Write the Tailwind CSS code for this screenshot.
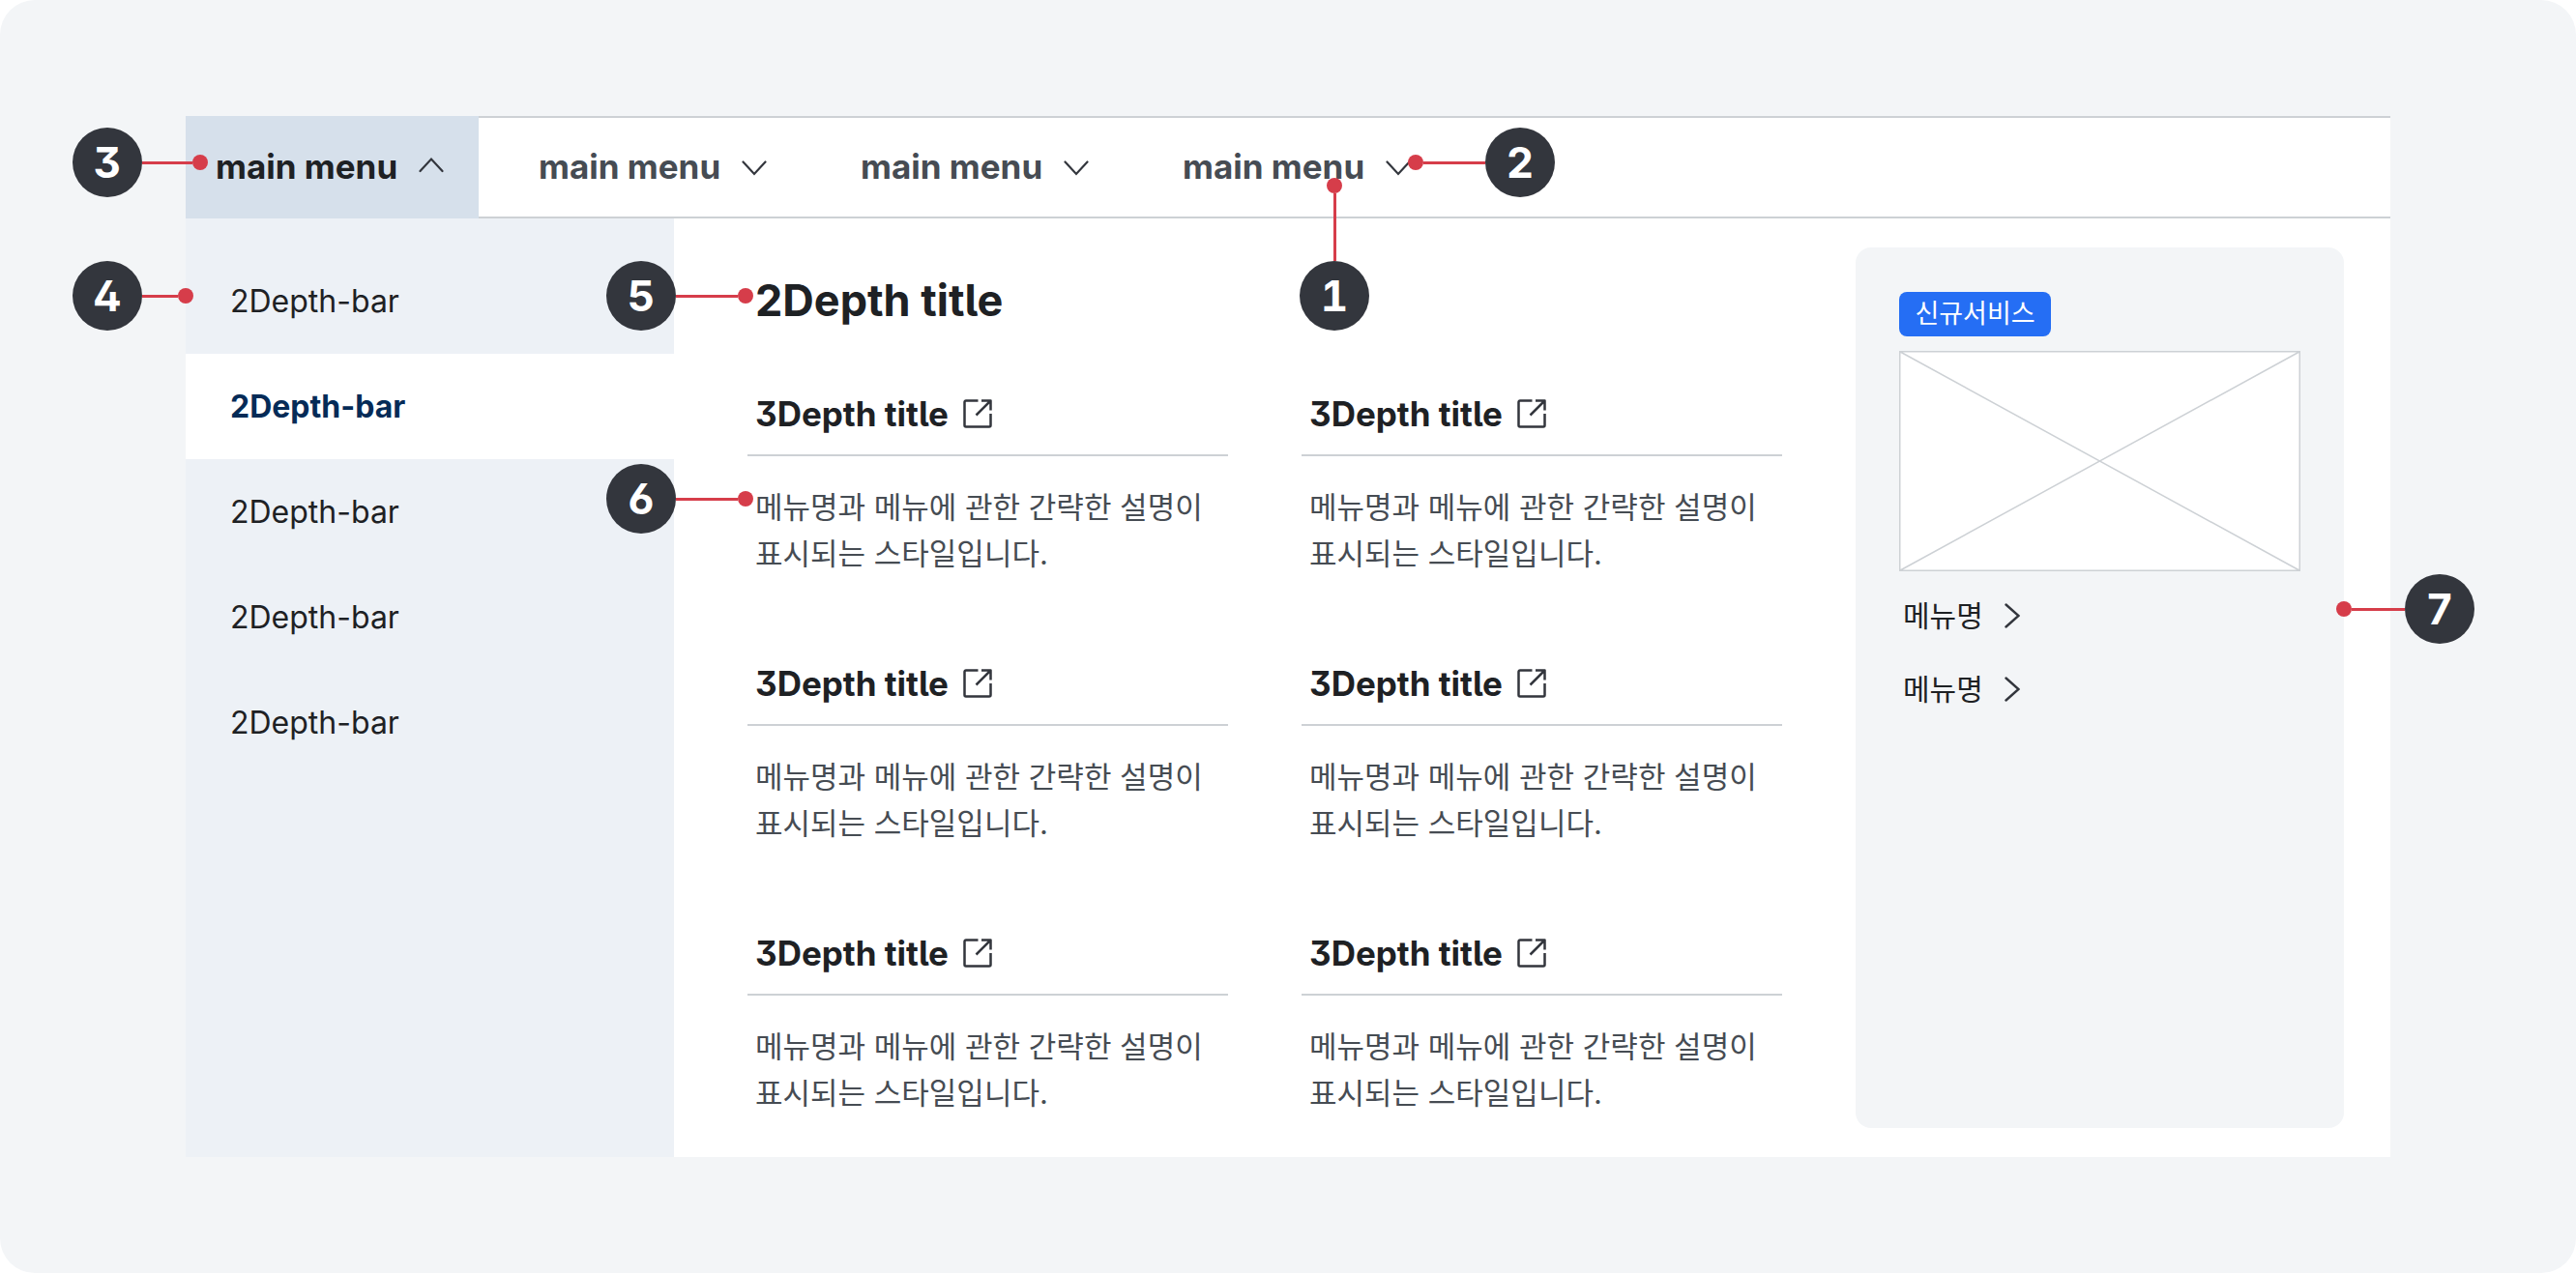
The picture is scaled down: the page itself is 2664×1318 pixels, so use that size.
<!DOCTYPE html>
<html lang="ko">
<head>
<meta charset="utf-8">
<meta name="viewport" content="width=device-width, initial-scale=1">
<title>main menu</title>
<script src="https://cdn.jsdelivr.net/npm/@tailwindcss/browser@4"></script>
</head>
<body class="bg-white font-[Inter,'Noto_Sans_CJK_KR',sans-serif] text-[#1e2124] [font-feature-settings:'cv02','cv03','cv05','cv09']">

<svg class="hidden" aria-hidden="true">
  <symbol id="up" viewBox="0 0 26 26"><path d="M1.5 18 13 5.500 24.500 18" fill="none" stroke="#33363d" stroke-width="2.200" stroke-linecap="round" stroke-linejoin="miter"/></symbol>
  <symbol id="down" viewBox="0 0 26 26"><path d="M1.500 8.500 13 21 24.500 8.500" fill="none" stroke="#33363d" stroke-width="2.200" stroke-linecap="round" stroke-linejoin="miter"/></symbol>
  <symbol id="right" viewBox="0 0 16 26"><path d="M1.500 1.500 14.500 13 1.500 24.500" fill="none" stroke="#33363d" stroke-width="2.400" stroke-linecap="round" stroke-linejoin="miter"/></symbol>
  <symbol id="open" viewBox="0 0 30 30"><path d="M15.500 1.500H3a1.500 1.500 0 0 0-1.500 1.500V27A1.500 1.500 0 0 0 3 28.500H27A1.500 1.500 0 0 0 28.500 27V15M19 1.500H28.500V11.500M28 2 13.500 16.500" fill="none" stroke="#33363d" stroke-width="2.500" stroke-linecap="butt" stroke-linejoin="round"/></symbol>
</svg>

<main class="min-h-[1317px] rounded-[36px] bg-[#f3f5f7] px-48 py-[120px]">
  <div class="bg-white">

    <!-- Main menu -->
    <nav aria-label="main menu" class="h-[106px] border-y-2 border-[#cdd1d5]">
      <ul class="flex h-full gap-[30px] text-[35px] font-bold text-[#464c53]">
        <li class="relative -my-0.5 w-[303px] bg-[#d6e0eb] text-[#1e2124]">
          <button type="button" aria-expanded="true" class="flex size-full items-center gap-[22px] pb-0.5 pl-[31px]">main menu<svg class="size-[26px]"><use href="#up"/></svg></button>
          <span class="absolute top-3 -left-[117px] flex items-center">
            <span class="flex size-18 items-center justify-center rounded-full bg-[#33363d] text-[44px] leading-none text-white [font-feature-settings:'tnum','cv02','cv03','cv09']">3</span>
            <span class="h-[3px] w-[52px] bg-[#d63d4a]"></span><span class="size-4 rounded-full bg-[#d63d4a]"></span>
          </span>
        </li>
        <li class="-my-0.5 w-[303px]">
          <button type="button" aria-expanded="false" class="flex size-full items-center gap-[22px] pb-0.5 pl-8">main menu<svg class="size-[26px]"><use href="#down"/></svg></button>
        </li>
        <li class="-my-0.5 w-[303px]">
          <button type="button" aria-expanded="false" class="flex size-full items-center gap-[22px] pb-0.5 pl-8">main menu<svg class="size-[26px]"><use href="#down"/></svg></button>
        </li>
        <li class="relative -my-0.5 w-[303px]">
          <button type="button" aria-expanded="false" class="flex size-full items-center gap-[22px] pb-0.5 pl-8">main menu<svg class="size-[26px]"><use href="#down"/></svg></button>
          <span class="absolute top-16 left-[153px] z-10 flex flex-col items-center">
            <span class="size-4 rounded-full bg-[#d63d4a]"></span><span class="h-[70px] w-[3px] bg-[#d63d4a]"></span>
            <span class="flex size-18 items-center justify-center rounded-full bg-[#33363d] text-[44px] leading-none text-white [font-feature-settings:'tnum','cv02','cv03','cv09']">1</span>
          </span>
          <span class="absolute top-3 left-[265px] flex items-center">
            <span class="size-4 rounded-full bg-[#d63d4a]"></span><span class="h-[3px] w-16 bg-[#d63d4a]"></span>
            <span class="flex size-18 items-center justify-center rounded-full bg-[#33363d] text-[44px] leading-none text-white [font-feature-settings:'tnum','cv02','cv03','cv09']">2</span>
          </span>
        </li>
      </ul>
    </nav>

    <div class="flex">
      <!-- Second level -->
      <nav aria-label="2Depth" class="relative w-[505px] shrink-0 bg-[#edf1f6] pt-[31px] text-[32px]">
        <a href="#" class="flex h-[109px] items-center px-[46px]">2Depth-bar</a>
        <a href="#" aria-current="page" class="flex h-[109px] items-center bg-white px-[46px] font-bold text-[#052b57]">2Depth-bar</a>
        <a href="#" class="flex h-[109px] items-center px-[46px]">2Depth-bar</a>
        <a href="#" class="flex h-[109px] items-center px-[46px]">2Depth-bar</a>
        <a href="#" class="flex h-[109px] items-center px-[46px]">2Depth-bar</a>
        <span class="absolute top-11 -left-[117px] flex items-center">
          <span class="flex size-18 items-center justify-center rounded-full bg-[#33363d] text-[44px] leading-none font-bold text-white [font-feature-settings:'tnum','cv02','cv03','cv09']">4</span>
          <span class="h-[3px] w-[37px] bg-[#d63d4a]"></span><span class="size-4 rounded-full bg-[#d63d4a]"></span>
        </span>
      </nav>

      <!-- Third level -->
      <section class="flex-1 px-[76px] pt-[55px] pb-[42px]">
        <div class="relative">
          <h2 class="pl-2 text-[45px] leading-[60px] font-bold">2Depth title</h2>
          <span class="absolute -top-[11px] -left-[146px] flex items-center">
            <span class="flex size-18 items-center justify-center rounded-full bg-[#33363d] text-[44px] leading-none font-bold text-white [font-feature-settings:'tnum','cv02','cv03','cv09']">5</span>
            <span class="h-[3px] w-16 bg-[#d63d4a]"></span><span class="size-4 rounded-full bg-[#d63d4a]"></span>
          </span>
        </div>
        <div class="mt-[63px] grid grid-cols-2 gap-x-[76px] gap-y-[86px]">
          <article>
            <h3 class="border-b-2 border-[#cdd1d5] pb-[18px] pl-2 text-[35px] leading-[48px] font-bold"><a href="#" class="flex items-center gap-[15px]">3Depth title<svg class="size-[30px]"><use href="#open"/></svg></a></h3>
            <div class="relative mt-[29px] pl-2 text-[31px] leading-[48px] text-[#464c53]">
              <p>메뉴명과 메뉴에 관한 간략한 설명이<br>표시되는 스타일입니다.</p>
              <span class="absolute -top-[21px] -left-[146px] flex items-center">
                <span class="flex size-18 items-center justify-center rounded-full bg-[#33363d] text-[44px] leading-none font-bold text-white [font-feature-settings:'tnum','cv02','cv03','cv09']">6</span>
                <span class="h-[3px] w-16 bg-[#d63d4a]"></span><span class="size-4 rounded-full bg-[#d63d4a]"></span>
              </span>
            </div>
          </article>
          <article>
            <h3 class="border-b-2 border-[#cdd1d5] pb-[18px] pl-2 text-[35px] leading-[48px] font-bold"><a href="#" class="flex items-center gap-[15px]">3Depth title<svg class="size-[30px]"><use href="#open"/></svg></a></h3>
            <p class="mt-[29px] pl-2 text-[31px] leading-[48px] text-[#464c53]">메뉴명과 메뉴에 관한 간략한 설명이<br>표시되는 스타일입니다.</p>
          </article>
          <article>
            <h3 class="border-b-2 border-[#cdd1d5] pb-[18px] pl-2 text-[35px] leading-[48px] font-bold"><a href="#" class="flex items-center gap-[15px]">3Depth title<svg class="size-[30px]"><use href="#open"/></svg></a></h3>
            <p class="mt-[29px] pl-2 text-[31px] leading-[48px] text-[#464c53]">메뉴명과 메뉴에 관한 간략한 설명이<br>표시되는 스타일입니다.</p>
          </article>
          <article>
            <h3 class="border-b-2 border-[#cdd1d5] pb-[18px] pl-2 text-[35px] leading-[48px] font-bold"><a href="#" class="flex items-center gap-[15px]">3Depth title<svg class="size-[30px]"><use href="#open"/></svg></a></h3>
            <p class="mt-[29px] pl-2 text-[31px] leading-[48px] text-[#464c53]">메뉴명과 메뉴에 관한 간략한 설명이<br>표시되는 스타일입니다.</p>
          </article>
          <article>
            <h3 class="border-b-2 border-[#cdd1d5] pb-[18px] pl-2 text-[35px] leading-[48px] font-bold"><a href="#" class="flex items-center gap-[15px]">3Depth title<svg class="size-[30px]"><use href="#open"/></svg></a></h3>
            <p class="mt-[29px] pl-2 text-[31px] leading-[48px] text-[#464c53]">메뉴명과 메뉴에 관한 간략한 설명이<br>표시되는 스타일입니다.</p>
          </article>
          <article>
            <h3 class="border-b-2 border-[#cdd1d5] pb-[18px] pl-2 text-[35px] leading-[48px] font-bold"><a href="#" class="flex items-center gap-[15px]">3Depth title<svg class="size-[30px]"><use href="#open"/></svg></a></h3>
            <p class="mt-[29px] pl-2 text-[31px] leading-[48px] text-[#464c53]">메뉴명과 메뉴에 관한 간략한 설명이<br>표시되는 스타일입니다.</p>
          </article>
        </div>
      </section>

      <!-- Promotion -->
      <aside class="relative my-[30px] mr-12 w-[505px] shrink-0 rounded-2xl bg-[#f3f5f7] px-[45px] pt-[46px]">
        <span class="flex h-[46px] w-[157px] items-center justify-center rounded-lg bg-[#256ef4] text-[27px] text-white">신규서비스</span>
        <svg class="mt-[15px] block h-[228px] w-full" viewBox="0 0 415 228" preserveAspectRatio="none" role="img" aria-label="image">
          <path d="M.75.75H414.250V227.250H.75ZM.75.75 414.250 227.250M414.250.75.75 227.250" fill="#fff" stroke="#cdd1d5" stroke-width="1.500"/>
        </svg>
        <ul class="mt-2 pl-1 text-[30px]">
          <li><a href="#" class="flex h-[76px] items-center gap-[22px]">메뉴명<svg class="h-[26px] w-4"><use href="#right"/></svg></a></li>
          <li><a href="#" class="flex h-[76px] items-center gap-[22px]">메뉴명<svg class="h-[26px] w-4"><use href="#right"/></svg></a></li>
        </ul>
        <span class="absolute top-[338px] -right-[135px] flex items-center">
          <span class="size-4 rounded-full bg-[#d63d4a]"></span><span class="h-[3px] w-[55px] bg-[#d63d4a]"></span>
          <span class="flex size-18 items-center justify-center rounded-full bg-[#33363d] text-[44px] leading-none font-bold text-white [font-feature-settings:'tnum','cv02','cv03','cv09']">7</span>
        </span>
      </aside>
    </div>
  </div>
</main>
</body>
</html>
